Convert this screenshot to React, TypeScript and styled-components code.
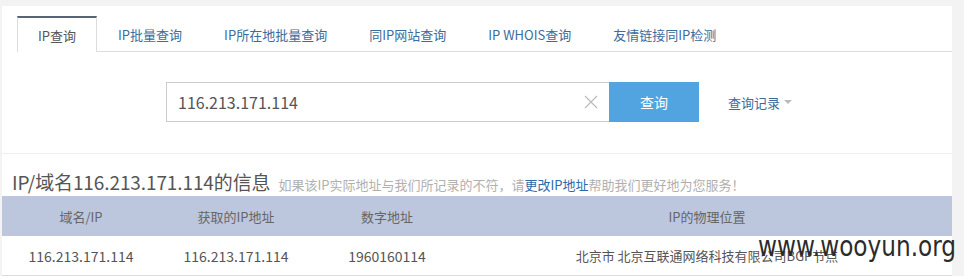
import React from 'react';
import styled, { createGlobalStyle } from 'styled-components';

const GlobalStyle = createGlobalStyle`
  html, body {
    margin: 0;
    padding: 0;
    background: #f3f3f3;
  }
  body {
    font-family: 'Noto Sans CJK SC', 'Noto Sans', sans-serif;
    color: #555;
  }
`;

const Page = styled.div`
  width: 964px;
  height: 276px;
  padding: 6px 12px 0 2px;
  box-sizing: border-box;
  overflow: hidden;
  position: relative;
`;

const Panel = styled.div`
  width: 950px;
  background: #fff;
  padding-top: 10px;
`;

const TabBar = styled.div`
  display: flex;
  margin: 0 0 0 15px;
  border-bottom: 1px solid #ddd;
  height: 35px;
`;

const Tab = styled.div<{ active?: boolean }>`
  display: flex;
  align-items: center;
  padding: 0 20px;
  box-sizing: border-box;
  font-size: 13px;
  color: ${p => (p.active ? '#555' : '#3b6c9c')};
  background: #fff;
  border: 1px solid ${p => (p.active ? '#ddd' : 'transparent')};
  border-top: 2px solid ${p => (p.active ? '#58627a' : 'transparent')};
  border-bottom: none;
  margin-bottom: ${p => (p.active ? '-1px' : '0')};
  height: ${p => (p.active ? '36px' : '35px')};
  white-space: nowrap;
`;

const SearchRow = styled.div`
  display: flex;
  align-items: center;
  padding: 30px 0 0 164px;
  height: 40px;
`;

const InputBox = styled.div`
  width: 443px;
  height: 40px;
  box-sizing: border-box;
  border: 1px solid #ccc;
  border-right: none;
  display: flex;
  align-items: center;
  padding: 0 11px;
`;

const InputText = styled.span`
  flex: 1;
  font-size: 16px;
  color: #555;
`;

const SearchButton = styled.div`
  width: 90px;
  height: 40px;
  background: #52a4e0;
  color: #fff;
  font-size: 14px;
  display: flex;
  align-items: center;
  justify-content: center;
`;

const History = styled.div`
  margin-left: 29px;
  display: flex;
  align-items: center;
  gap: 4px;
  font-size: 13px;
  color: #3b6c9c;
`;

const Caret = styled.span`
  width: 0;
  height: 0;
  border-left: 4px solid transparent;
  border-right: 4px solid transparent;
  border-top: 4px solid #bbb;
`;

const Divider = styled.div`
  margin-top: 31px;
  height: 1px;
  background: #eee;
`;

const InfoHead = styled.div`
  display: flex;
  align-items: baseline;
  padding: 14px 0 0 10px;
  height: 28px;
`;

const Title = styled.span`
  font-size: 19px;
  color: #555;
  letter-spacing: -0.1px;
`;

const Note = styled.span`
  margin-left: 8px;
  font-size: 13px;
  color: #b0b0b0;
`;

const NoteLink = styled.span`
  color: #2e6aa8;
`;

const Table = styled.table`
  width: 950px;
  border-collapse: collapse;
  table-layout: fixed;
`;

const Th = styled.th<{ w: number }>`
  width: ${p => p.w}px;
  height: 40px;
  background: #bcc7dd;
  font-weight: normal;
  font-size: 13px;
  color: #666;
  text-align: center;
  padding: 0;
`;

const Td = styled.td`
  height: 39px;
  font-size: 14px;
  color: #555;
  text-align: center;
  padding: 0;
  border-bottom: 1px solid #ddd;
  background: #fff;
`;

const LocTd = styled(Td)`
  font-size: 13px;
`;

const Watermark = styled.div`
  position: absolute;
  left: 758px;
  top: 232px;
  font-family: 'DejaVu Sans', 'Noto Sans', sans-serif;
  font-size: 29px;
  line-height: 1;
  color: #2b2b2b;
  white-space: nowrap;
  transform: scaleX(0.8);
  transform-origin: left top;
`;

const ClearIcon = () => (
  <svg width="14" height="14" viewBox="0 0 14 14">
    <path d="M1 1L13 13M13 1L1 13" stroke="#bbb" strokeWidth="1.2" fill="none" />
  </svg>
);

const tabs = ['IP查询', 'IP批量查询', 'IP所在地批量查询', '同IP网站查询', 'IP WHOIS查询', '友情链接同IP检测'];

export default function App() {
  return (
    <Page>
      <GlobalStyle />
      <Panel>
        <TabBar>
          {tabs.map((t, i) => (
            <Tab key={t} active={i === 0}>
              {t}
            </Tab>
          ))}
        </TabBar>
        <SearchRow>
          <InputBox>
            <InputText>116.213.171.114</InputText>
            <ClearIcon />
          </InputBox>
          <SearchButton>查询</SearchButton>
          <History>
            查询记录
            <Caret />
          </History>
        </SearchRow>
        <Divider />
        <InfoHead>
          <Title>IP/域名116.213.171.114的信息</Title>
          <Note>
            如果该IP实际地址与我们所记录的不符，请<NoteLink>更改IP地址</NoteLink>帮助我们更好地为您服务！
          </Note>
        </InfoHead>
        <Table>
          <thead>
            <tr>
              <Th w={158}>域名/IP</Th>
              <Th w={152}>获取的IP地址</Th>
              <Th w={150}>数字地址</Th>
              <Th w={490}>IP的物理位置</Th>
            </tr>
          </thead>
          <tbody>
            <tr>
              <Td>116.213.171.114</Td>
              <Td>116.213.171.114</Td>
              <Td>1960160114</Td>
              <LocTd>北京市 北京互联通网络科技有限公司BGP节点</LocTd>
            </tr>
          </tbody>
        </Table>
      </Panel>
      <Watermark>www.wooyun.org</Watermark>
    </Page>
  );
}
